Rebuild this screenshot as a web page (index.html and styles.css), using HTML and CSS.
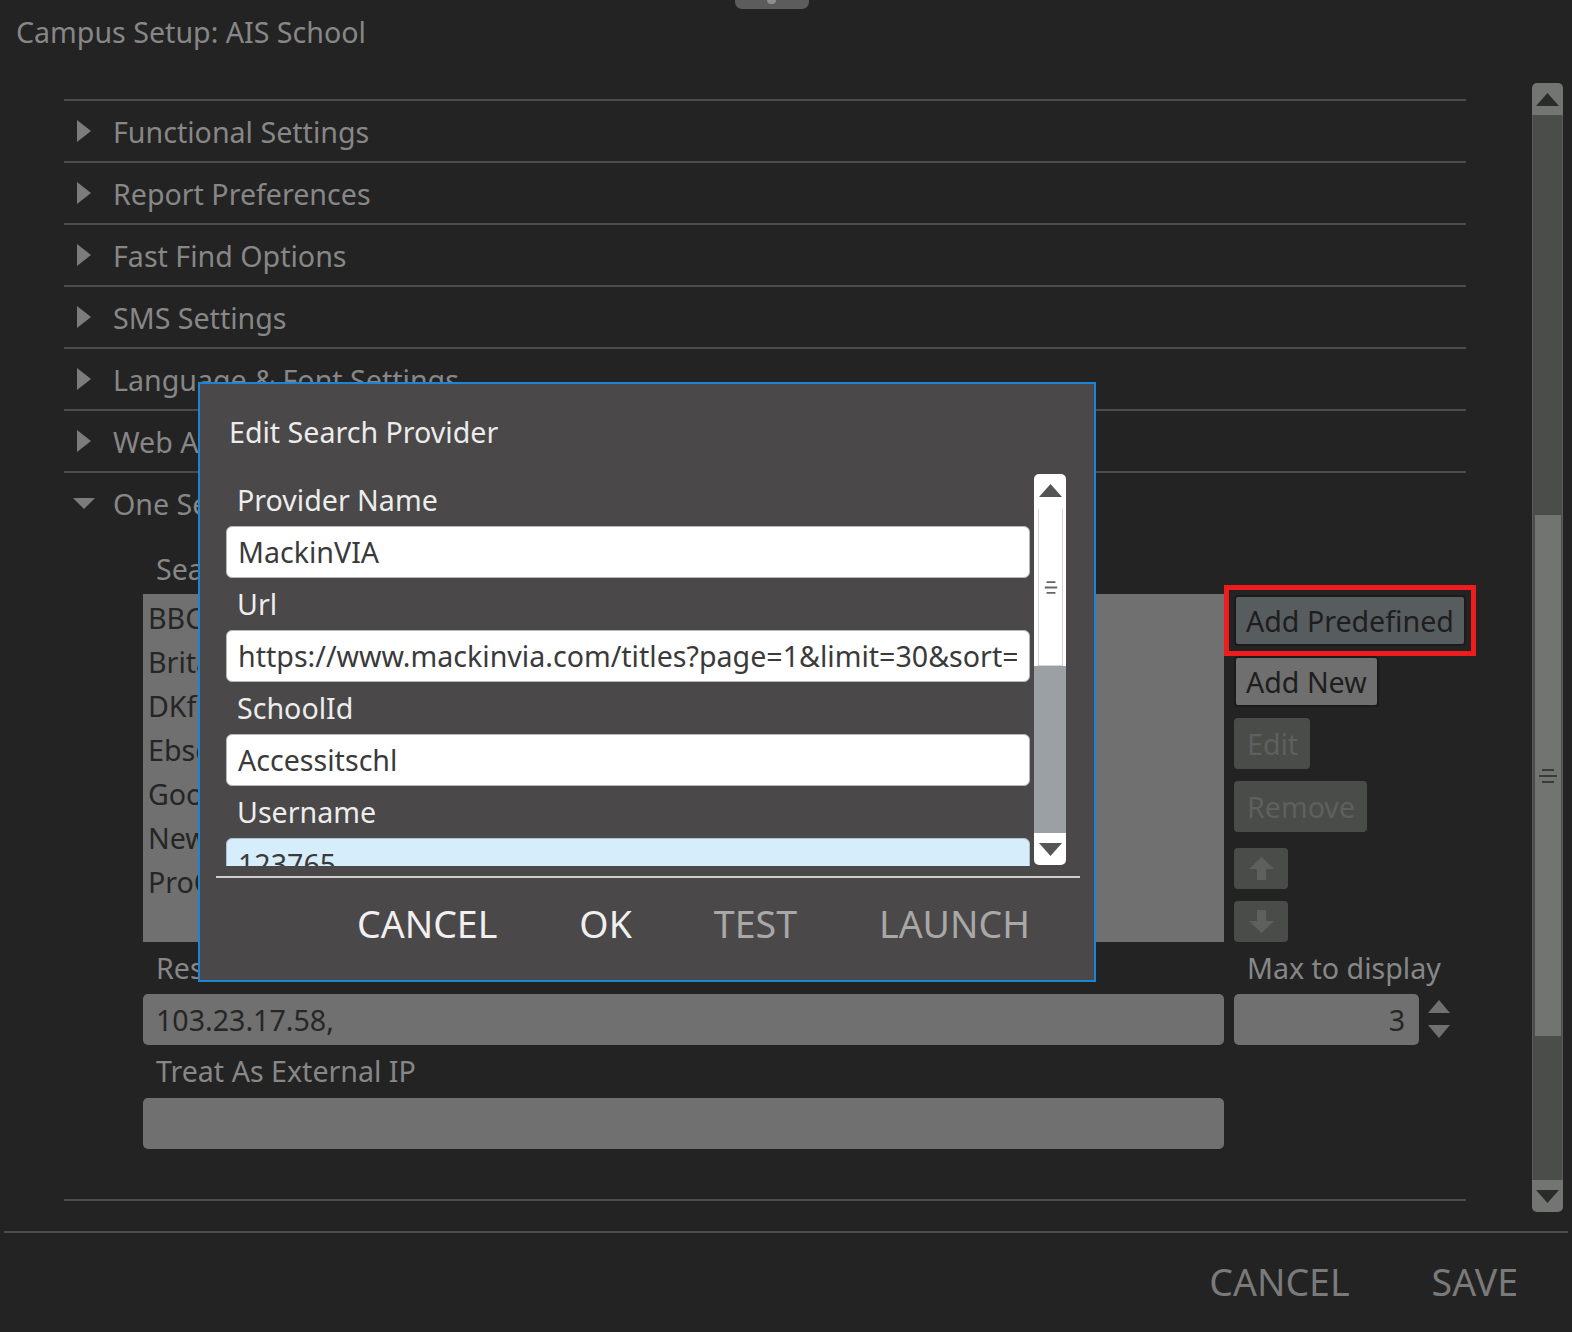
FILE: index.html
```html
<!DOCTYPE html>
<html lang="en">
<head>
  <meta charset="UTF-8">
  <meta name="viewport" content="width=device-width, initial-scale=1.0">
  <title>Campus Setup</title>
  <link rel="stylesheet" href="styles.css">
</head>
<body>
  <div class="app">
    <div class="grab"></div>
    <h1 class="page-title">Campus Setup: AIS School</h1>

    <div class="main">
      <div class="sections">
        <div class="section-head">
          <svg class="caret" viewBox="0 0 14 22"><polygon points="0,0 14,11 0,22"/></svg>
          Functional Settings
        </div>
        <div class="section-head">
          <svg class="caret" viewBox="0 0 14 22"><polygon points="0,0 14,11 0,22"/></svg>
          Report Preferences
        </div>
        <div class="section-head">
          <svg class="caret" viewBox="0 0 14 22"><polygon points="0,0 14,11 0,22"/></svg>
          Fast Find Options
        </div>
        <div class="section-head">
          <svg class="caret" viewBox="0 0 14 22"><polygon points="0,0 14,11 0,22"/></svg>
          SMS Settings
        </div>
        <div class="section-head">
          <svg class="caret" viewBox="0 0 14 22"><polygon points="0,0 14,11 0,22"/></svg>
          Language &amp; Font Settings
        </div>
        <div class="section-head">
          <svg class="caret" viewBox="0 0 14 22"><polygon points="0,0 14,11 0,22"/></svg>
          Web Access Settings
        </div>
        <div class="section-head">
          <svg class="caret caret-down" viewBox="0 0 22 11"><polygon points="0,0 22,0 11,11"/></svg>
          One Search Settings
        </div>

        <div class="section-body">
          <div class="provider-grid">
            <div class="field-label first">Search Providers</div>
            <div></div>

            <ul class="provider-list">
              <li>BBC Bitesize</li>
              <li>Britannica School</li>
              <li>DKfindout!</li>
              <li>Ebsco</li>
              <li>Google Scholar</li>
              <li>Newsela</li>
              <li>ProQuest</li>
            </ul>

            <div class="side-buttons">
              <div class="focus-ring">
                <button class="btn btn-focus">Add Predefined</button>
              </div>
              <button class="btn btn-plain">Add New</button>
              <button class="btn btn-off">Edit</button>
              <button class="btn btn-off">Remove</button>
              <button class="btn btn-off btn-icon">
                <svg viewBox="0 0 25 23"><path d="M12.5 0 L25 12 H17 V23 H8 V12 H0 Z"/></svg>
              </button>
              <button class="btn btn-off btn-icon">
                <svg viewBox="0 0 25 23"><path d="M12.5 23 L25 11 H17 V0 H8 V11 H0 Z"/></svg>
              </button>
            </div>

            <div class="field-label">Restricted IPs</div>
            <div class="field-label">Max to display</div>

            <div class="text-box">103.23.17.58,</div>
            <div class="spin">
              <div class="spin-box">3</div>
              <svg class="spin-arrows" viewBox="0 0 22 38">
                <polygon points="0,13 11,0 22,13"/>
                <polygon points="0,25 22,25 11,38"/>
              </svg>
            </div>

            <div class="field-label">Treat As External IP</div>
            <div></div>

            <div class="text-box"></div>
            <div></div>
          </div>
        </div>
      </div>

      <div class="vscroll">
        <div class="vscroll-btn up">
          <svg viewBox="0 0 23 13"><polygon points="0,13 11.5,0 23,13"/></svg>
        </div>
        <div class="vscroll-track">
          <div class="vscroll-handle">
            <svg class="grip" viewBox="0 0 18 14"><path d="M3 1H15M0 7H18M3 13H15"/></svg>
          </div>
        </div>
        <div class="vscroll-btn down">
          <svg viewBox="0 0 23 13"><polygon points="0,0 23,0 11.5,13"/></svg>
        </div>
      </div>
    </div>

    <div class="footer">
      <span class="footer-btn">CANCEL</span>
      <span class="footer-btn">SAVE</span>
    </div>

    <!-- Edit Search Provider dialog -->
    <div class="dialog">
      <div class="dialog-title">Edit Search Provider</div>
      <div class="dialog-body">
        <div class="dialog-fields">
          <div class="dlg-label">Provider Name</div>
          <div class="dlg-input"><span>MackinVIA</span></div>
          <div class="dlg-label">Url</div>
          <div class="dlg-input"><span>https://www.mackinvia.com/titles?page=1&amp;limit=30&amp;sort=(default)&amp;q=</span></div>
          <div class="dlg-label">SchoolId</div>
          <div class="dlg-input"><span>Accessitschl</span></div>
          <div class="dlg-label">Username</div>
          <div class="dlg-input active"><span>123765</span></div>
          <div class="dlg-label">Password</div>
          <div class="dlg-input"><span></span></div>
        </div>
        <div class="dlg-scroll">
          <div class="dlg-scroll-btn up">
            <svg viewBox="0 0 23 13"><polygon points="0,13 11.5,0 23,13"/></svg>
          </div>
          <div class="dlg-scroll-track">
            <div class="dlg-scroll-handle">
              <div class="dlg-grip-box">
                <svg class="grip" viewBox="0 0 18 14"><path d="M4 1H14M2 7H16M4 13H14"/></svg>
              </div>
            </div>
          </div>
          <div class="dlg-scroll-btn down">
            <svg viewBox="0 0 23 13"><polygon points="0,0 23,0 11.5,13"/></svg>
          </div>
        </div>
      </div>
      <div class="dialog-sep"></div>
      <div class="dialog-actions">
        <span class="dlg-action">CANCEL</span>
        <span class="dlg-action">OK</span>
        <span class="dlg-action dim">TEST</span>
        <span class="dlg-action dim">LAUNCH</span>
      </div>
    </div>
  </div>
</body>
</html>
```
FILE: styles.css
```css
* {
  margin: 0;
  padding: 0;
  box-sizing: border-box;
}

body {
  background-color: #232323;
  font-family: "Noto Sans", "Open Sans", sans-serif;
  color: #8a8a8a;
}

.app {
  position: relative;
  width: 1572px;
  height: 1332px;
  overflow: hidden;
}

/* pull tab at the top edge */
.grab {
  position: absolute;
  left: 735px;
  top: 0;
  width: 74px;
  height: 9px;
  background-color: #5c5c5c;
  border-radius: 0 0 7px 7px;
}

.grab::after {
  content: "";
  position: absolute;
  left: 32px;
  top: 0;
  width: 9px;
  height: 4px;
  border-radius: 0 0 4px 4px;
  background-color: #8e8e8e;
}

.page-title {
  font-size: 28.6px;
  font-weight: 400;
  line-height: 64px;
  height: 64px;
  padding-left: 16px;
  color: #878787;
}

.main {
  display: flex;
  margin-top: 19px;
  height: 1129px;
}

.sections {
  margin-left: 64px;
  width: 1402px;
  padding-top: 16px;
}

.section-head {
  display: flex;
  align-items: center;
  height: 62px;
  border-top: 2px solid #4c4c4c;
  padding-left: 13px;
  font-size: 28.6px;
  color: #878787;
  white-space: nowrap;
}

.caret {
  width: 14px;
  height: 22px;
  margin-right: 22px;
  fill: #7c7c7c;
}

.caret-down {
  width: 22px;
  height: 11px;
  margin-left: -4px;
  margin-right: 18px;
}

.section-body {
  height: 668px;
  padding-left: 79px;
  border-bottom: 2px solid #4c4c4c;
}

.provider-grid {
  display: grid;
  grid-template-columns: 1081px 232px;
  grid-template-rows: 61px 348px 52px 51px 53px 51px;
  column-gap: 10px;
}

.field-label {
  font-size: 28.6px;
  padding-left: 13px;
  line-height: 52px;
  color: #878787;
  white-space: nowrap;
}

.field-label.first {
  padding-top: 10px;
  line-height: 51px;
}

.provider-list {
  list-style: none;
  background-color: #6f706f;
  padding: 2px 0 0 5px;
  font-size: 28.6px;
  line-height: 44px;
  color: #252525;
  overflow: hidden;
}

.side-buttons {
  display: flex;
  flex-direction: column;
  align-items: flex-start;
  padding-top: 1px;
}

/* red highlight box drawn round the focused button */
.focus-ring {
  border: 5px solid #ee1c1c;
  padding: 5px;
  margin: -10px 0 -10px -10px;
}

.btn {
  font-family: inherit;
  font-size: 28.6px;
  height: 51px;
  border-radius: 4px;
  border: none;
  padding: 0 12px 0 13px;
  display: flex;
  align-items: center;
  white-space: nowrap;
  cursor: pointer;
}

.btn-focus {
  background-color: #575d5e;
  color: #1e1e1e;
  border: 2px solid #1b1b1b;
  padding: 0 10px;
}

.btn-plain {
  background-color: #6e6f6e;
  color: #1e1e1e;
  border: 2px solid #1b1b1b;
  padding: 0 10px;
  margin-top: 10px;
}

.btn-off {
  background-color: #4a4c4a;
  color: #5e605e;
  margin-top: 11px;
}

.btn-off + .btn-off {
  margin-top: 12px;
}

.btn-icon {
  width: 54px;
  height: 41px;
  justify-content: center;
  padding: 0;
}

.btn-off + .btn-icon {
  margin-top: 16px;
}

.btn-icon + .btn-icon {
  margin-top: 12px;
}

.btn-icon svg {
  width: 25px;
  height: 23px;
  fill: #5e605e;
}

.text-box {
  background-color: #6f706f;
  border-radius: 5px;
  font-size: 28.6px;
  line-height: 51px;
  padding-left: 13px;
  color: #262626;
}

.spin {
  display: flex;
  align-items: flex-start;
}

.spin-box {
  width: 185px;
  height: 51px;
  background-color: #6f706f;
  border-radius: 5px;
  font-size: 28.6px;
  line-height: 51px;
  text-align: right;
  padding-right: 14px;
  color: #262626;
}

.spin-arrows {
  width: 22px;
  height: 38px;
  margin: 6px 0 0 9px;
  fill: #6f706f;
}

/* page scrollbar */
.vscroll {
  margin-left: 66px;
  width: 31px;
  display: flex;
  flex-direction: column;
}

.vscroll-btn {
  height: 32px;
  background-color: #737573;
  display: flex;
  align-items: center;
  justify-content: center;
}

.vscroll-btn.up {
  border-radius: 5px 5px 0 0;
}

.vscroll-btn.down {
  border-radius: 0 0 5px 5px;
}

.vscroll-btn svg {
  width: 23px;
  height: 13px;
  fill: #2b2b2b;
}

.vscroll-track {
  flex: 1;
  background-color: #4b4d4b;
  border-left: 1px solid #5a5c5a;
  border-right: 1px solid #5a5c5a;
  padding: 400px 1px 0 2px;
}

.vscroll-handle {
  height: 521px;
  background-color: #727472;
  display: flex;
  align-items: center;
  justify-content: center;
}

.grip {
  width: 18px;
  height: 14px;
  fill: none;
  stroke: #3a3c3a;
  stroke-width: 2;
}

.footer {
  margin: 19px 4px 0 4px;
  border-top: 2px solid #4c4c4c;
  display: flex;
  justify-content: flex-end;
  gap: 82px;
  padding-right: 50px;
}

.footer-btn {
  font-size: 37.5px;
  line-height: 97px;
  color: #7a7a7a;
}

/* Dialog */
.dialog {
  position: absolute;
  left: 198px;
  top: 382px;
  width: 898px;
  height: 600px;
  background-color: #4a4849;
  border: 2px solid #1b84d6;
}

.dialog-title {
  height: 90px;
  padding: 30px 0 0 29px;
  font-size: 28.6px;
  line-height: 36px;
  color: #ececec;
}

.dialog-body {
  display: flex;
  gap: 4px;
  padding-left: 26px;
  height: 392px;
}

.dialog-fields {
  width: 804px;
  overflow: hidden;
}

.dlg-label {
  height: 52px;
  line-height: 52px;
  padding-left: 11px;
  font-size: 28.6px;
  color: #ededed;
}

.dlg-input {
  height: 52px;
  background-color: #fff;
  border: 1px solid #b8b8b8;
  border-radius: 6px;
  padding: 0 12px 0 11px;
  font-size: 28.6px;
  line-height: 50px;
  color: #3a3a3a;
}

.dlg-input span {
  display: block;
  overflow: hidden;
  white-space: nowrap;
}

.dlg-input.active {
  background-color: #d6eefc;
  border-color: #a9c4d4;
}

.dlg-scroll {
  width: 32px;
  height: 391px;
  display: flex;
  flex-direction: column;
}

.dlg-scroll-btn {
  height: 32px;
  background-color: #fff;
  display: flex;
  align-items: center;
  justify-content: center;
}

.dlg-scroll-btn.up {
  border-radius: 5px 5px 0 0;
}

.dlg-scroll-btn.down {
  border-radius: 0 0 5px 5px;
}

.dlg-scroll-btn svg {
  width: 23px;
  height: 13px;
  fill: #555;
}

.dlg-scroll-track {
  flex: 1;
  background-color: #9aa0a3;
}

.dlg-scroll-handle {
  height: 160px;
  background-color: #fff;
  padding: 3px 3px 0 4px;
}

.dlg-grip-box {
  height: 100%;
  border: 1px solid #d4d4d4;
  border-top: none;
  display: flex;
  align-items: center;
  justify-content: center;
}

.dlg-grip-box .grip {
  stroke: #666;
  width: 16px;
  height: 13px;
}

.dialog-sep {
  margin: 10px 14px 0 16px;
  border-top: 2px solid #cfcfcf;
}

.dialog-actions {
  display: flex;
  justify-content: flex-end;
  gap: 82px;
  padding-right: 64px;
}

.dlg-action {
  font-size: 37.5px;
  line-height: 92px;
  color: #f0f0f0;
}

.dlg-action.dim {
  color: #a8a8a8;
}
```
